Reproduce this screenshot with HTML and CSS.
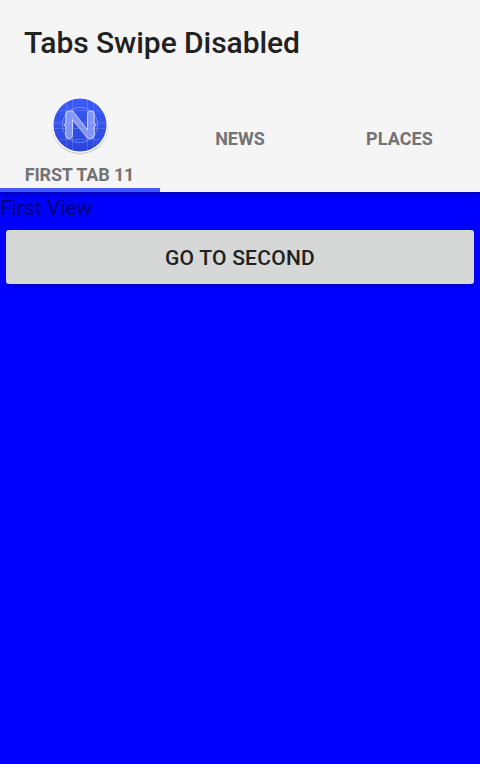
FILE: index.html
```html
<!DOCTYPE html>
<html lang="en">
<head>
<meta charset="utf-8">
<title>Tabs Swipe Disabled</title>
<link rel="stylesheet" href="styles.css">
</head>
<body>
<header class="app-bar">
  <h1 class="title">Tabs Swipe Disabled</h1>
  <nav class="tabs">
    <a class="tab tab-active">
      <svg class="logo" viewBox="0 0 64 64" aria-hidden="true">
        <defs>
          <linearGradient id="disc" x1="0" y1="0" x2="0" y2="1">
            <stop offset="0" stop-color="#3d5cf8"/>
            <stop offset="1" stop-color="#2a45da"/>
          </linearGradient>
          <clipPath id="round"><circle cx="32" cy="31" r="26.5"/></clipPath>
        </defs>
        <circle cx="32" cy="32.2" r="28.6" fill="#000" opacity=".06"/>
        <circle cx="32" cy="31.7" r="28.2" fill="#000" opacity=".12"/>
        <circle cx="32" cy="31" r="28" fill="#fff"/>
        <circle cx="32" cy="31" r="26.5" fill="url(#disc)"/>
        <g clip-path="url(#round)" fill="none" stroke="#a9baff" stroke-width=".8" opacity=".3">
          <path d="M5 16.500H59M5 28H59M5 30H59M5 34.500H59M5 45.500H59M18.500 4V58M24.500 4V58M39.500 4V58M45.500 4V58M12 4L58 59"/>
        </g>
        <circle cx="32" cy="31" r="17.6" fill="none" stroke="#c1ccff" stroke-width=".7" opacity=".6"/>
        <path d="M20.500 17.200h4.500L39.500 36V20q0-2.800 2.500-2.800h2q2.300 0 2.300 2.800v8q0 2 1.800 3q-1.800 1-1.800 3v7.500q0 2.800-2.300 2.800h-4.500L24.500 25.500v16q0 2.800-2.500 2.800h-2q-2.300 0-2.300-2.800v-7.500q0-2-1.800-3q1.800-1 1.800-3v-8q0-2.800 2.800-2.800z" fill="#b0bdff" fill-opacity=".62" stroke="#dce2ff" stroke-width=".8"/>
      </svg>
      <span class="first-name">FIRST TAB 11</span>
    </a>
    <a class="tab"><span>NEWS</span></a>
    <a class="tab"><span class="places-name">PLACES</span></a>
  </nav>
</header>
<main class="view">
  <div class="label">First View</div>
  <button class="action">GO TO SECOND</button>
</main>
</body>
</html>
```

FILE: styles.css
```css
* { box-sizing: border-box; }
body {
  margin: 0;
  height: 764px;
  display: flex;
  flex-direction: column;
  overflow: hidden;
  background: #00f;
  font-family: Roboto, sans-serif;
}
.app-bar {
  height: 192px;
  flex: none;
  background: #f5f5f5;
  box-shadow: 0 2px 5px rgba(0, 0, 0, .35);
}
.title {
  margin: 0;
  height: 84px;
  padding: 0 24px;
  color: #212121;
  font-size: 30px;
  font-weight: 500;
  letter-spacing: -.06px;
  line-height: 86px;
  white-space: nowrap;
}
.tabs {
  display: grid;
  grid-template-columns: repeat(3, 1fr);
  height: 108px;
}
.tab {
  display: flex;
  flex-direction: column;
  align-items: center;
  justify-content: center;
  padding-top: 2px;
  color: #737373;
  font-size: 18px;
  font-weight: 700;
  line-height: 22px;
  white-space: nowrap;
}
.tab-active {
  justify-content: flex-start;
  padding-top: 10px;
  border-bottom: 4px solid #3d5afe;
}
.first-name { letter-spacing: -.15px; margin-right: 1px; }
.places-name { letter-spacing: .1px; margin-right: 1px; }
.logo {
  display: block;
  width: 64px;
  height: 64px;
  margin-bottom: 6px;
}
.view {
  flex: 1;
  display: flex;
  flex-direction: column;
}
.label {
  height: 32px;
  color: #000073;
  font-size: 21px;
  line-height: 32px;
}
.action {
  height: 54px;
  margin: 6px 6px 0;
  padding: 2px 0 0;
  border: 0;
  border-radius: 3px;
  background: #d6d7d7;
  box-shadow: 0 2px 3px rgba(0, 0, 0, .22);
  color: #212121;
  font: 500 21px/52px Roboto, sans-serif;
  letter-spacing: .25px;
}
```
